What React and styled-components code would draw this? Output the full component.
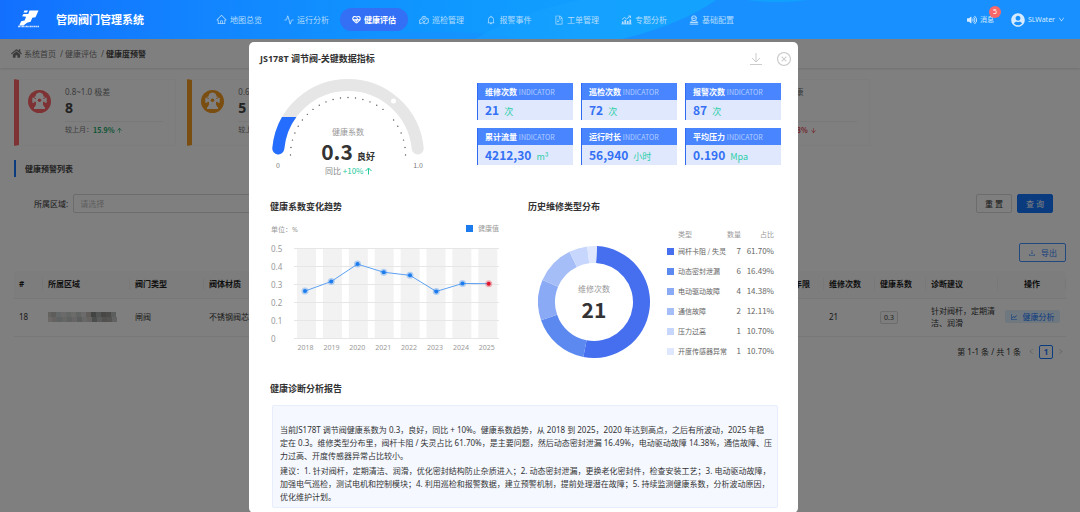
//____________IMPORT/EXPORT____________
import styled, { createGlobalStyle } from 'styled-components';
import {
    AiOutlineHome,
    AiOutlineBell,
    AiOutlineFileText,
    AiOutlineLineChart,
    AiOutlineDownload,
    AiOutlineCloseCircle,
    AiOutlineArrowUp,
    AiOutlineArrowDown,
    AiOutlineDown,
    AiOutlineLeft,
    AiOutlineRight,
} from 'react-icons/ai';
import { FaHome, FaVolumeUp, FaUserCircle } from 'react-icons/fa';
import { Activity, HeartPulse } from 'lucide-react';
//____________IMPORT/EXPORT____________

//____________GLOBAL____________
const Global_Style = createGlobalStyle`
    * {
        box-sizing: border-box;
    }

    body {
        margin: 0;
        overflow: hidden;
        background-color: #ffffff;
        color: #333333;
        font-family: "Noto Sans", "Noto Sans CJK SC", sans-serif;
        font-size: 8px;
        line-height: 12px;
    }

    button, select {
        font: inherit;
        color: inherit;
        margin: 0;
        cursor: pointer;
    }

    a {
        color: inherit;
        text-decoration: none;
    }

    h1, h2, h3, p, dl, dt, dd {
        margin: 0;
        font-size: inherit;
    }

    svg {
        display: block;
        flex-shrink: 0;
    }
`;
//____________GLOBAL____________

//____________NAVBAR____________
const Navbar = styled.header`
    position: relative;
    z-index: 20;
    height: 39px;
    display: grid;
    grid-template-columns: 19% 50% 1fr;
    align-items: center;
    color: #ffffff;
    background: linear-gradient(90deg, #1370ff 0%, #1284ff 18%, #0f98ff 42%, #12a0ff 58%, #12a0ff 100%);
    overflow: hidden;
`;
const Navbar_Waves = styled.svg`
    position: absolute;
    inset: 0;
    width: 100%;
    height: 100%;
`;
const Brand = styled.a`
    position: relative;
    display: flex;
    align-items: center;
    gap: 16px;
    padding-left: 17px;
`;
const Brand_Title = styled.h1`
    font-size: 11px;
    line-height: 16px;
    white-space: nowrap;
`;
const Nav_List = styled.nav`
    position: relative;
    display: grid;
    grid-template-columns: repeat(8, 1fr);
`;
const Nav_Link = styled.a`
    display: flex;
    align-items: center;
    justify-content: center;
    gap: 3px;
    height: 23px;
    border-radius: 12px;
    white-space: nowrap;
    color: ${({ $active }) => ($active ? '#ffffff' : '#b4dcff')};
    font-weight: ${({ $active }) => ($active ? 700 : 400)};
    background-color: ${({ $active }) => ($active ? '#3370f6' : 'transparent')};
`;
const User_Area = styled.div`
    position: relative;
    display: flex;
    align-items: center;
    justify-content: flex-end;
    gap: 17px;
    padding-right: 15px;
    font-size: 7px;
    color: #d6ebff;
`;
const User_Button = styled.button`
    position: relative;
    display: flex;
    align-items: center;
    gap: 3px;
    padding: 0;
    border: none;
    background: none;
`;
const Badge = styled.span`
    position: absolute;
    top: -8px;
    right: -7px;
    width: 12px;
    height: 12px;
    border-radius: 50%;
    background-color: #f96868;
    color: #ffffff;
    line-height: 12px;
    text-align: center;
`;
//____________NAVBAR____________

//____________PAGE____________
const Breadcrumb = styled.nav`
    display: flex;
    align-items: center;
    gap: 2px;
    height: 29px;
    padding-left: 11px;
    color: #777777;
    box-shadow: 0 1px 2px rgba(0, 0, 0, 0.12);

    span {
        padding-left: 2px;
    }

    strong {
        color: #444444;
    }
`;
const Page = styled.main`
    padding: 11px 14px;
`;
const Stat_Grid = styled.section`
    display: grid;
    grid-template-columns: repeat(5, 162fr) 185fr;
    gap: 11px;
`;
const Stat_Card = styled.article`
    grid-column: ${({ $slot }) => $slot};
    display: flex;
    gap: 14px;
    height: 67px;
    padding: 6px 12px 0 9px;
    border: 1px solid #f8f8f8;
    border-left: 5px solid ${({ $color }) => $color};
    border-radius: 1px;

    > svg {
        margin-top: 4px;
    }
`;
const Stat_Body = styled.div`
    flex: 1;
    color: #777777;
`;
const Stat_Value = styled.strong`
    display: block;
    color: #444444;
    font-size: 14px;
    line-height: 20px;
`;
const Stat_Foot = styled.p`
    display: flex;
    align-items: center;
    margin-top: 3px;
    padding-top: 2px;
    border-top: 1px solid #f0f0f0;
    font-size: 7px;

    b {
        display: flex;
        align-items: center;
        gap: 2px;
        font-family: "Noto Sans CJK SC", sans-serif;
        color: ${({ $down }) => ($down ? '#e8474f' : '#17a866')};
    }
`;
const Section_Title = styled.h2`
    margin-top: 14px;
    padding-left: 9px;
    border-left: 2px solid #1677ff;
    line-height: 17px;
    color: #444444;
`;
const Filter_Form = styled.form`
    display: flex;
    align-items: center;
    gap: 5px;
    margin: 17px 13px 0 20px;
`;
const Filter_Select = styled.select`
    width: 280px;
    height: 19px;
    margin-right: auto;
    padding: 0 6px;
    appearance: none;
    border: 1px solid #d9d9d9;
    border-radius: 2px;
    background-color: #ffffff;
    color: #bfbfbf;
`;
const BUTTON_COLORS = {
    primary: ['#1677ff', '#1677ff', '#ffffff'],
    plain: ['#d9d9d9', '#ffffff', '#333333'],
    outline: ['#4592ff', '#ffffff', '#2f83ff'],
};
const Button = styled.button`
    display: flex;
    align-items: center;
    justify-content: center;
    gap: 5px;
    width: ${({ $wide }) => ($wide ? '47px' : '36px')};
    height: 19px;
    padding: 0;
    border-radius: 2px;
    border: 1px solid ${({ $kind }) => BUTTON_COLORS[$kind][0]};
    background-color: ${({ $kind }) => BUTTON_COLORS[$kind][1]};
    color: ${({ $kind }) => BUTTON_COLORS[$kind][2]};
`;
const Toolbar = styled.div`
    display: flex;
    justify-content: flex-end;
    margin: 30px 0 9px;
`;
const Data_Table = styled.table`
    width: 100%;
    table-layout: fixed;
    border-collapse: collapse;

    th, td {
        padding: 0 0 0 5px;
        text-align: left;
        overflow: hidden;
        border-bottom: 1px solid #f0f0f0;
    }

    th {
        height: 27px;
        color: #1f1f1f;
        white-space: nowrap;
        background: linear-gradient(#f0f0f0, #f0f0f0) right center / 1px 12px no-repeat #fafafa;
    }

    td {
        height: 38px;
    }

    th:last-child, td:last-child {
        padding: 0;
        text-align: center;
    }
`;
const Tag = styled.span`
    display: inline-block;
    padding: 0 3px;
    border: 1px solid #d9d9d9;
    border-radius: 2px;
    background-color: #fafafa;
    color: #444444;
    font-size: 7px;
    line-height: 11px;
`;
const Analyse_Button = styled.button`
    display: inline-flex;
    align-items: center;
    gap: 5px;
    height: 13px;
    padding: 0 5px;
    border: none;
    border-radius: 2px;
    background-color: #e0f0ff;
    color: #1677ff;
    white-space: nowrap;
`;
const Pagination = styled.nav`
    display: flex;
    align-items: center;
    justify-content: flex-end;
    gap: 4px;
    margin-top: 8px;
    padding-right: 2px;

    span {
        margin-right: 3px;
    }
`;
const Page_Button = styled.button`
    display: flex;
    align-items: center;
    justify-content: center;
    height: 14px;
    padding: 0;
    border: none;
    background: none;
    color: #bfbfbf;

    &[aria-current] {
        width: 14px;
        border: 1px solid #1677ff;
        border-radius: 2px;
        color: #1677ff;
        font-weight: 700;
    }
`;
//____________PAGE____________

//____________MODAL____________
const Mask = styled.div`
    position: fixed;
    inset: 39px 0 0;
    z-index: 10;
    display: grid;
    grid-template-columns: 249fr 549fr 282fr;
    align-items: start;
    padding-top: 3px;
    overflow: hidden;
    background-color: rgba(0, 0, 0, 0.5);
`;
const Modal = styled.section`
    grid-column: 2;
    padding-bottom: 5px;
    border-radius: 5px;
    background-color: #ffffff;
`;
const Modal_Header = styled.header`
    display: flex;
    align-items: center;
    gap: 14px;
    height: 33px;
    padding: 0 6px 0 11px;
    font-size: 9px;

    h2 {
        flex: 1;
    }
`;
const Icon_Button = styled.button`
    display: flex;
    padding: 0;
    border: none;
    background: none;
    color: #cccccc;
`;
const Modal_Body = styled.div`
    padding: 0 17px 0 21px;
`;
const Top_Row = styled.div`
    display: grid;
    grid-template-columns: 207px 1fr;

    > svg {
        font-family: "Noto Sans CJK SC", sans-serif;
    }
`;
const Kpi_Grid = styled.dl`
    display: grid;
    grid-template-columns: repeat(3, 1fr);
    gap: 8px;
    align-content: start;
    padding-top: 8px;
    font-family: "Noto Sans CJK SC", sans-serif;
`;
const Kpi_Card = styled.div`
    border-left: 1px solid #2e6bf2;
    background-color: #dfe8fd;

    dt {
        height: 17px;
        padding-left: 7px;
        background-color: #4985ff;
        color: #ffffff;
        font-weight: 700;
        line-height: 17px;
        white-space: nowrap;
    }

    small {
        color: #b3ceff;
        font-size: 7px;
        font-weight: 400;
    }

    dd {
        display: flex;
        align-items: baseline;
        gap: 5px;
        height: 20px;
        padding-left: 7px;
        color: #2dcfa8;
        font-size: 9px;
        line-height: 20px;
    }

    strong {
        color: #3470f4;
        font-size: 12px;
    }
`;
const Chart_Row = styled.div`
    display: grid;
    grid-template-columns: 258px 1fr;
    margin-top: 20px;
`;
const Panel_Title = styled.h3`
    font-size: 9px;
    line-height: 14px;
`;
const Donut_Row = styled.div`
    display: flex;
    gap: 17px;
    padding: 13px 7px 0 10px;
    font-family: "Noto Sans CJK SC", sans-serif;

    > svg {
        margin-top: 19px;
    }
`;
const Legend_Table = styled.table`
    flex: 1;
    border-collapse: collapse;
    color: #666666;

    th, td {
        padding: 0;
        height: 20px;
        text-align: right;
        white-space: nowrap;
    }

    th {
        font-size: 7px;
        font-weight: 400;
        text-align: left;
    }

    thead th {
        height: 14px;
        color: #999999;
        text-align: right;
    }

    thead th:first-child {
        padding-left: 11px;
        text-align: left;
    }

    thead th:last-child {
        width: 34px;
    }
`;
const Legend_Name = styled.span`
    display: flex;
    align-items: center;
    gap: 4px;

    &::before {
        content: '';
        width: 7px;
        height: 7px;
        background-color: ${({ $color }) => $color};
    }
`;
const Report = styled.section`
    margin-top: 21px;
`;
const Report_Box = styled.div`
    margin: 9px 3px 0 2px;
    padding: 17px 3px 4px 7px;
    border: 1px solid #e6edfc;
    border-radius: 2px;
    background-color: #f5f8ff;
    line-height: 13px;

    p + p {
        margin-top: 2px;
    }
`;
const No_Wrap = styled.span`
    white-space: nowrap;
`;
//____________MODAL____________

//____________DATOS____________
const NAV = [
    { label: '地图总览', icon: <AiOutlineHome size={11} /> },
    { label: '运行分析', icon: <Activity size={10} /> },
    { label: '健康评估', icon: <HeartPulse size={9} strokeWidth={3} />, active: true },
    { label: '巡检管理', icon: <Patrol_Icon /> },
    { label: '报警事件', icon: <AiOutlineBell size={10} /> },
    { label: '工单管理', icon: <AiOutlineFileText size={10} /> },
    { label: '专题分析', icon: <Topic_Icon /> },
    { label: '基础配置', icon: <Config_Icon /> },
];

const STATS = [
    { slot: 1, range: '0.8~1.0 极差', value: 8, color: '#ff6468', rate: '15.9%' },
    { slot: 2, range: '0.6~0.8 较差', value: 5, color: '#f59a23', rate: '12.4%' },
    { slot: 5, range: '0.0~0.2 健康', value: 36, color: '#25c48a', rate: '13.8%', down: true },
];

const KPIS = [
    ['维修次数', '21', '次'],
    ['巡检次数', '72', '次'],
    ['报警次数', '87', '次'],
    ['累计流量', '4212,30', 'm³'],
    ['运行时长', '56,940', '小时'],
    ['平均压力', '0.190', 'Mpa'],
];

const TREND = [
    [2018, 0.262], [2019, 0.315], [2020, 0.411], [2021, 0.366],
    [2022, 0.349], [2023, 0.26], [2024, 0.304], [2025, 0.303],
];

const TYPES = [
    { name: '阀杆卡阻 / 失灵', count: 7, rate: '61.70%', color: '#466ff0', from: 3, to: 191 },
    { name: '动态密封泄漏', count: 6, rate: '16.49%', color: '#5c89f0', from: 191, to: 251 },
    { name: '电动驱动故障', count: 4, rate: '14.38%', color: '#8aaaf5', from: 251, to: 293 },
    { name: '通信故障', count: 2, rate: '12.11%', color: '#a6bef7', from: 293, to: 334 },
    { name: '压力过高', count: 1, rate: '10.70%', color: '#c7d6fc', from: 334, to: 353 },
    { name: '开度传感器异常', count: 1, rate: '10.70%', color: '#dfe7fe', from: 353, to: 363 },
];

const COLUMNS = [
    ['#', 29], ['所属区域', 87], ['阀门类型', 74], ['阀体材质'], ['使用年限', 51],
    ['维修次数', 51], ['健康系数', 51], ['诊断建议', 72], ['操作', 68],
];

const MOSAIC = ['#c8c2bd', '#b8b4b1', '#a9b0b0', '#bcbcba', '#a8adad', '#bdbab8', '#9da0a1', '#bbbdbc', '#b9b3ad', '#77797a', '#9a9c9c', '#858380', '#8d8b8a', '#b1b2b3'];
//____________DATOS____________

//____________DIBUJOS____________
function Logo() {
    return (
        <svg width="23" height="20" viewBox="0 0 23 20" fill="#ffffff">
            <path d="M7.500 .5h3.500l-1 2h-3.500z" />
            <path d="M12.500 .5h9l-3 6.700-3.200.6-1.700 4-3.600 1-3.500 2.700H2.200l2-4.300 3.400-.6 1.500-3.800-4-.5 1.400-2.200h4.800z" />
            <path d="M1 16.500h21" stroke="#ffffff" strokeWidth="1.400" strokeDasharray="2 .5 1 .4" opacity=".8" />
        </svg>
    );
}

function Patrol_Icon() {
    return (
        <svg width="10" height="10" viewBox="0 0 20 20" fill="none" stroke="currentColor" strokeWidth="1.800">
            <path d="M10 2.500a4.500 4.500 0 0 1 4.500 4.500c0 3-2.500 4.500-4.500 7-2-2.500-4.500-4-4.500-7A4.500 4.500 0 0 1 10 2.500z" />
            <circle cx="10" cy="7" r="1.400" />
            <path d="M4.500 8L1.500 9.500v8l5.500-2 6 2 5.500-2v-8l-3-.5M10 14v2" />
        </svg>
    );
}

function Topic_Icon() {
    return (
        <svg width="11" height="10" viewBox="0 0 22 20" fill="none" stroke="currentColor">
            <path d="M2 9l5-4 4 3 8-6M14.500 2H19v4" strokeWidth="1.800" />
            <path d="M3.500 18v-5M8.500 18v-8M13.500 18v-6M18.500 18V9" strokeWidth="3.400" />
            <path d="M1 18h20" strokeWidth="1.600" />
        </svg>
    );
}

function Config_Icon() {
    return (
        <svg width="10" height="10" viewBox="0 0 20 20" fill="none" stroke="currentColor" strokeWidth="2">
            <circle cx="10" cy="6.500" r="4.800" />
            <path d="M6 6.500h5a3 3 0 0 0 3-2M2.500 15c1-2.500 3.500-3.500 7.500-3.500s6.500 1 7.500 3.500z" />
            <path d="M1.500 18.300h17" />
        </svg>
    );
}

function Save_Icon() {
    return (
        <svg width="12" height="14" viewBox="0 0 12 14" fill="none" stroke="currentColor">
            <path d="M6 1v9M2 6l4 4 4-4M0 12.500h12" />
        </svg>
    );
}

function Hydrant({ color }) {
    return (
        <svg width="23" height="23" viewBox="0 0 23 23">
            <circle cx="11.500" cy="11.500" r="11.500" fill={color} />
            <g fill="#ffffff">
                <path d="M7.500 6.800a4 4 0 0 1 8 0zM10.500 2.500h2v2h-2zM6.500 6.500h10V8h-10z" />
                <path d="M8 8h7v8H8zM6 17h11v2H6zM7 15.500h9V17H7zM4.300 7.800h2v5h-2zM16.700 7.800h2v5h-2zM6 8.800h11v3H6z" />
            </g>
            <circle cx="11.500" cy="10.300" r="1.800" fill={color} />
        </svg>
    );
}

function Gauge() {
    const dots = Array.from({ length: 25 }, (_, i) => i - 12).filter((i) => i !== 6);
    return (
        <svg width="160" height="105" viewBox="0 0 160 105" textAnchor="middle">
            <defs>
                <clipPath id="gauge-value">
                    <rect x="0" y="42" width="40" height="50" />
                </clipPath>
            </defs>
            <g fill="none" strokeWidth="12" strokeLinecap="round">
                <path d="M8.300 73.500A70 70 0 0 1 147.700 73.500" stroke="#e6e6e6" />
                <path d="M8.300 73.500A70 70 0 0 1 147.700 73.500" stroke="#256dff" clipPath="url(#gauge-value)" />
            </g>
            <circle cx="123.500" cy="26" r="2.500" fill="#ffffff" />
            {dots.map((i) => {
                const a = (i * 7.5 * Math.PI) / 180;
                return <circle key={i} cx={78 + 57.5 * Math.sin(a)} cy={80 - 57.5 * Math.cos(a)} r=".7" fill="#555555" />;
            })}
            <text x="78" y="60" fontSize="8" fill="#999999">健康系数</text>
            <text x="67" y="85" fontSize="21" fontWeight="700" fill="#333333">0.3</text>
            <text x="96" y="85" fontSize="9" fontWeight="700" fill="#333333">良好</text>
            <text x="55" y="99" fontSize="8" fill="#888888" textAnchor="start">
                同比 <tspan fill="#22c99a">+10%</tspan>
            </text>
            <path d="M98.500 99.500v-6M95.500 96l3-3 3 3" fill="none" stroke="#22c99a" />
            <text x="8" y="93" fontSize="7" fill="#777777">0</text>
            <text x="148" y="93" fontSize="7" fill="#777777">1.0</text>
        </svg>
    );
}

function Trend_Chart() {
    const pts = TREND.map(([year, v], i) => ({ year, x: 35 + i * 26.25, y: 124.5 - v * 181 }));
    return (
        <svg width="236" height="140" viewBox="0 0 236 140">
            <text x="1" y="18" fontSize="7" fill="#999999">单位：%</text>
            <rect x="196" y="11" width="7" height="7" fill="#1c7cee" />
            <text x="208" y="17" fontSize="7" fill="#999999">健康值</text>
            {pts.map((p, i) => (
                <rect key={p.year} x={27 + i * 25.9} y="34" width="19" height="90" fill="#f2f2f2" />
            ))}
            {[0.5, 0.4, 0.3, 0.2, 0.1, 0].map((v, i) => (
                <g key={v}>
                    <path d={`M24 ${34.5 + i * 18}H229`} stroke="#e6e6e6" />
                    <text x="1" y={38 + i * 18} fontSize="8" fill="#999999">{v}</text>
                </g>
            ))}
            {pts.map((p, i) => (
                <text key={p.year} x={35.5 + i * 25.9} y="136" fontSize="7" fill="#999999" textAnchor="middle">{p.year}</text>
            ))}
            <polyline points={pts.map((p) => `${p.x},${p.y}`).join(' ')} fill="none" stroke="#5ea2f3" />
            {pts.map((p) => {
                const color = p.year === 2025 ? '#e0142c' : '#1c7cee';
                return (
                    <g key={p.year} fill={color}>
                        <circle cx={p.x} cy={p.y} r="3.500" opacity=".3" />
                        <circle cx={p.x} cy={p.y} r="2" />
                    </g>
                );
            })}
        </svg>
    );
}

function Donut() {
    const point = (deg, r) => {
        const a = (deg * Math.PI) / 180;
        return `${56 + r * Math.sin(a)} ${56 - r * Math.cos(a)}`;
    };
    return (
        <svg width="112" height="112" viewBox="0 0 112 112" textAnchor="middle">
            {TYPES.map(({ name, color, from, to }) => {
                const large = to - from > 180 ? 1 : 0;
                return (
                    <path
                        key={name}
                        fill={color}
                        d={`M${point(from, 56)}A56 56 0 ${large} 1 ${point(to, 56)}L${point(to, 39)}A39 39 0 ${large} 0 ${point(from, 39)}Z`}
                    />
                );
            })}
            <text x="56" y="46" fontSize="8" fill="#999999">维修次数</text>
            <text x="56" y="72" fontSize="21" fontWeight="700" fill="#333333">21</text>
        </svg>
    );
}

function Mosaic() {
    return (
        <svg width="72" height="10" viewBox="2 0 72 10" role="img" aria-label="所属区域">
            {MOSAIC.map((c, i) => (
                <g key={i} fill={c}>
                    <rect x={i * 5} y="0" width="5" height="5" opacity={i < 2 || i > 7 ? 0.9 : 0.6} />
                    <rect x={i * 5 + 1} y="5" width="5" height="5" opacity=".75" />
                </g>
            ))}
        </svg>
    );
}
//____________DIBUJOS____________

//____________SECCIONES____________
function Top_Bar() {
    return (
        <Navbar>
            <Navbar_Waves viewBox="0 0 1080 39" preserveAspectRatio="none">
                <path d="M716 0Q680 25 622 39H1080V0z" fill="#1890ff" />
                <path d="M340 39Q450 25 520 39z" fill="#1890ff" opacity=".6" />
                <path d="M475 39Q520 12 580 0H716Q680 25 622 39z" fill="#18a4ff" opacity=".4" />
                <ellipse cx="777" cy="-2" rx="34" ry="4" fill="#12a0ff" />
            </Navbar_Waves>
            <Brand href="#">
                <Logo />
                <Brand_Title>管网阀门管理系统</Brand_Title>
            </Brand>
            <Nav_List>
                {NAV.map(({ label, icon, active }) => (
                    <Nav_Link key={label} href="#" $active={active}>
                        {icon}
                        {label}
                    </Nav_Link>
                ))}
            </Nav_List>
            <User_Area>
                <User_Button type="button">
                    <FaVolumeUp size={10} />
                    消息
                    <Badge>5</Badge>
                </User_Button>
                <User_Button type="button">
                    <FaUserCircle size={14} />
                    SLWater
                    <AiOutlineDown size={7} />
                </User_Button>
            </User_Area>
        </Navbar>
    );
}

function Warning_Page() {
    return (
        <>
            <Breadcrumb>
                <FaHome size={11} />
                <a href="#">系统首页</a>
                <span>/</span>
                <a href="#">健康评估</a>
                <span>/</span>
                <strong>健康度预警</strong>
            </Breadcrumb>
            <Page>
                <Stat_Grid>
                    {STATS.map(({ slot, range, value, color, rate, down }) => (
                        <Stat_Card key={range} $slot={slot} $color={color}>
                            <Hydrant color={color} />
                            <Stat_Body>
                                <p>{range}</p>
                                <Stat_Value>{value}</Stat_Value>
                                <Stat_Foot $down={down}>
                                    较上月：
                                    <b>
                                        {rate}
                                        {down ? <AiOutlineArrowDown size={7} /> : <AiOutlineArrowUp size={7} />}
                                    </b>
                                </Stat_Foot>
                            </Stat_Body>
                        </Stat_Card>
                    ))}
                </Stat_Grid>
                <Section_Title>健康预警列表</Section_Title>
                <Filter_Form>
                    <label htmlFor="area">所属区域:</label>
                    <Filter_Select id="area">
                        <option>请选择</option>
                    </Filter_Select>
                    <Button type="reset" $kind="plain">重 置</Button>
                    <Button type="button" $kind="primary">查 询</Button>
                </Filter_Form>
                <Toolbar>
                    <Button type="button" $kind="outline" $wide>
                        <AiOutlineDownload size={8} />
                        导出
                    </Button>
                </Toolbar>
                <Data_Table>
                    <colgroup>
                        {COLUMNS.map(([name, width]) => (
                            <col key={name} width={width} />
                        ))}
                    </colgroup>
                    <thead>
                        <tr>
                            {COLUMNS.map(([name]) => (
                                <th key={name} scope="col">{name}</th>
                            ))}
                        </tr>
                    </thead>
                    <tbody>
                        <tr>
                            <td>18</td>
                            <td><Mosaic /></td>
                            <td>闸阀</td>
                            <td>不锈钢阀芯</td>
                            <td />
                            <td>21</td>
                            <td><Tag>0.3</Tag></td>
                            <td>针对阀杆，定期清洁、润滑</td>
                            <td>
                                <Analyse_Button type="button">
                                    <AiOutlineLineChart size={8} />
                                    健康分析
                                </Analyse_Button>
                            </td>
                        </tr>
                    </tbody>
                </Data_Table>
                <Pagination>
                    <span>第 1-1 条 / 共 1 条</span>
                    <Page_Button type="button" aria-label="上一页"><AiOutlineLeft size={7} /></Page_Button>
                    <Page_Button type="button" aria-current="page">1</Page_Button>
                    <Page_Button type="button" aria-label="下一页"><AiOutlineRight size={7} /></Page_Button>
                </Pagination>
            </Page>
        </>
    );
}

function Detail_Modal() {
    return (
        <Mask>
            <Modal role="dialog" aria-labelledby="detail-title">
                <Modal_Header>
                    <h2 id="detail-title">JS178T 调节阀-关键数据指标</h2>
                    <Icon_Button type="button" aria-label="下载"><Save_Icon /></Icon_Button>
                    <Icon_Button type="button" aria-label="关闭"><AiOutlineCloseCircle size={16} /></Icon_Button>
                </Modal_Header>
                <Modal_Body>
                    <Top_Row>
                        <Gauge />
                        <Kpi_Grid>
                            {KPIS.map(([name, value, unit]) => (
                                <Kpi_Card key={name}>
                                    <dt>{name} <small>INDICATOR</small></dt>
                                    <dd><strong>{value}</strong>{unit}</dd>
                                </Kpi_Card>
                            ))}
                        </Kpi_Grid>
                    </Top_Row>
                    <Chart_Row>
                        <section>
                            <Panel_Title>健康系数变化趋势</Panel_Title>
                            <Trend_Chart />
                        </section>
                        <section>
                            <Panel_Title>历史维修类型分布</Panel_Title>
                            <Donut_Row>
                                <Donut />
                                <Legend_Table>
                                    <thead>
                                        <tr>
                                            <th scope="col">类型</th>
                                            <th scope="col">数量</th>
                                            <th scope="col">占比</th>
                                        </tr>
                                    </thead>
                                    <tbody>
                                        {TYPES.map(({ name, count, rate, color }) => (
                                            <tr key={name}>
                                                <th scope="row"><Legend_Name $color={color}>{name}</Legend_Name></th>
                                                <td>{count}</td>
                                                <td>{rate}</td>
                                            </tr>
                                        ))}
                                    </tbody>
                                </Legend_Table>
                            </Donut_Row>
                        </section>
                    </Chart_Row>
                    <Report>
                        <Panel_Title>健康诊断分析报告</Panel_Title>
                        <Report_Box>
                            <p>
                                当前JS178T 调节阀健康系数为 0.3，良好，同比 + 10%。健康系数趋势，从 2018 到 2025，2020 年达到高点，之后有所波动，2025 年稳<No_Wrap>定在 0.3。</No_Wrap>维修类型分布里，阀杆卡阻 / 失灵占比 61.70%，是主要问题，然后动态密封泄漏 16.49%，电动驱动故障 14.38%，通信故障、压力过高、开度传感器异常占比较小。
                            </p>
                            <p>
                                建议：1. 针对阀杆，定期清洁、润滑，优化密封结构防止杂质进入；2. 动态密封泄漏，更换老化密封件，检查安装工艺；3. 电动驱动故障，加强电气巡检，测试电机和控制模块；4. 利用巡检和报警数据，建立预警机制，提前处理潜在故障；5. 持续监测健康系数，分析波动原因，优化维护计划。
                            </p>
                        </Report_Box>
                    </Report>
                </Modal_Body>
            </Modal>
        </Mask>
    );
}
//____________SECCIONES____________

export default function App() {
    return (
        <>
            <Global_Style />
            <Top_Bar />
            <Warning_Page />
            <Detail_Modal />
        </>
    );
}
